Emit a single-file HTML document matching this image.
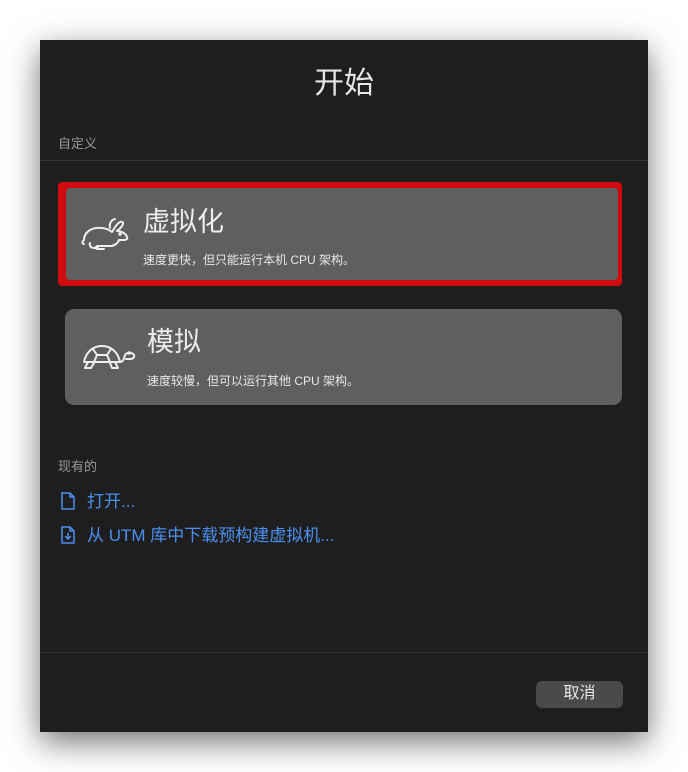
<!DOCTYPE html>
<html><head><meta charset="utf-8"><style>
*{margin:0;padding:0;box-sizing:border-box}
body{width:688px;height:772px;background:#fff;position:relative;overflow:hidden;font-family:"Liberation Sans","Noto Sans CJK SC",sans-serif}
.win{position:absolute;left:40px;top:40px;width:608px;height:692px;background:#1e1e1e;box-shadow:0 10px 30px rgba(0,0,0,.55)}
.abs{position:absolute}
.title{left:0;width:608px;top:18px;text-align:center;color:#e6e6e6;font-size:30px}
.sec{color:#9a9a9a;font-size:13px}
.hr{left:0;width:608px;height:1px;background:#333}
.card{background:#5f5f5f;border-radius:9px}
.h{color:#ececec;font-size:27px}
.s{color:#e8e8e8;font-size:12px}
.link{color:#4b8ff0;font-size:17px}
</style></head><body>
<div class="win">
<div class="abs title">开始</div>
<div class="abs sec" style="left:18px;top:93px">自定义</div>
<div class="abs hr" style="top:120px"></div>
<div class="abs" style="left:18px;top:142px;width:564px;height:104px;background:#d10a10;border-radius:4px"></div>
<div class="abs card" style="left:26px;top:148px;width:552px;height:92px;border-radius:4px"></div>
<svg class="abs" style="left:40px;top:176px" width="52" height="40" viewBox="0 0 52 40" fill="none" stroke="#eee" stroke-width="2" stroke-linecap="round" stroke-linejoin="round">
<path d="M4 24c0-8 8-13 17-12 5 0 8 2 11 4 2-3 4-8 8-10 3-1 4 1 2 4-1 2-3 3-5 5 5 0 9 3 10 6 1 2-1 3-3 3h-5c-1 3-4 5-7 6H18c-3 0-3 3 0 3h6M4 24c-2 1-2 4 0 4M10 27c-1 3 1 5 4 5h4"/><path d="M30 12c-1-4 1-8 5-9"/><circle cx="40" cy="18" r=".8" fill="#eee"/></svg>
<div class="abs h" style="left:103px;top:160px">虚拟化</div>
<div class="abs s" style="left:103px;top:211px">速度更快，但只能运行本机 CPU 架构。</div>
<div class="abs card" style="left:25px;top:269px;width:557px;height:96px"></div>
<svg class="abs" style="left:40px;top:298px" width="56" height="36" viewBox="0 0 56 36" fill="none" stroke="#eee" stroke-width="2" stroke-linecap="round" stroke-linejoin="round">
<path d="M4 24c2-10 9-16 18-16s16 6 18 16H4zM40 24c3 0 4-3 5-7 2-3 7-3 9 0 1 2-1 4-4 4h-4M8 24l-3 6h6l3-5M30 25l2 5h6l-3-6M13 11l4 6h10l4-6M17 17l-3 7M27 17l3 7"/><circle cx="49" cy="15" r=".8" fill="#eee"/></svg>
<div class="abs h" style="left:107px;top:280px">模拟</div>
<div class="abs s" style="left:107px;top:332px">速度较慢，但可以运行其他 CPU 架构。</div>
<div class="abs sec" style="left:18px;top:416px">现有的</div>
<svg class="abs" style="left:20px;top:451px" width="16" height="20" viewBox="0 0 16 20" fill="none" stroke="#4b8ff0" stroke-width="1.5" stroke-linejoin="round"><path d="M2 2h8l4 4v12H2z M10 2v4h4"/></svg>
<div class="abs link" style="left:47px;top:447px">打开...</div>
<svg class="abs" style="left:20px;top:485px" width="16" height="20" viewBox="0 0 16 20" fill="none" stroke="#4b8ff0" stroke-width="1.5" stroke-linejoin="round" stroke-linecap="round"><path d="M2 2h8l4 4v12H2z M10 2v4h4 M8 8v6 M5.5 11.5 8 14l2.5-2.5"/></svg>
<div class="abs link" style="left:47px;top:481px">从 UTM 库中下载预构建虚拟机...</div>
<div class="abs hr" style="top:612px;background:#2e2e2e"></div>
<div class="abs" style="left:496px;top:641px;width:87px;height:27px;background:#4a4a4a;border-radius:6px;color:#e8e8e8;font-size:16px;text-align:center;line-height:25px">取消</div>
</div>
</body></html>
